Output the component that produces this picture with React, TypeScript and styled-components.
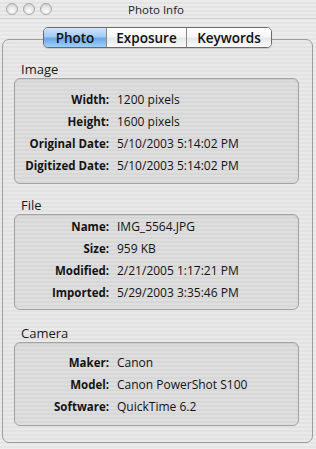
import React from "react";
import styled, { createGlobalStyle } from "styled-components";

const GlobalStyle = createGlobalStyle`
  html, body {
    margin: 0;
    padding: 0;
    background: #e9e9e9;
  }
  * {
    box-sizing: border-box;
  }
`;

const pinstripe = (a: string, b: string) =>
  `repeating-linear-gradient(to bottom, ${a} 0px, ${a} 2px, ${b} 2px, ${b} 4px)`;

const Window = styled.div`
  width: 316px;
  height: 449px;
  background: ${pinstripe("#ececec", "#e5e5e5")};
  font-family: "Open Sans", "DejaVu Sans", sans-serif;
  color: #111;
  display: flex;
  flex-direction: column;
  overflow: hidden;
`;

const TitleBar = styled.div`
  height: 19px;
  display: flex;
  align-items: center;
  padding-left: 6px;
  background: ${pinstripe("#ebebeb", "#e3e3e3")};
  border-bottom: 1px solid #d2d2d2;
`;

const Lights = styled.div`
  display: flex;
  gap: 5px;
`;

const Light = styled.span`
  width: 12px;
  height: 12px;
  border-radius: 50%;
  border: 1px solid #a9a9a9;
  background: radial-gradient(circle at 50% 70%, #ffffff 0%, #e2e2e2 55%, #c4c4c4 100%);
`;

const Title = styled.div`
  flex: 1;
  text-align: center;
  font-size: 11.5px;
  color: #222;
  margin-right: 56px;
`;

const Body = styled.div`
  flex: 1;
  display: flex;
  flex-direction: column;
  padding: 8px 3px 6px 2px;
`;

const Tabs = styled.div`
  align-self: center;
  display: flex;
  height: 21px;
  border: 1px solid #6b6b6b;
  border-radius: 5px;
  overflow: hidden;
  position: relative;
  z-index: 1;
  margin-bottom: -9px;
  box-shadow: 0 1px 1px rgba(0, 0, 0, 0.15);
`;

const Tab = styled.div<{ $active?: boolean; $w: number }>`
  width: ${(p) => p.$w}px;
  display: flex;
  align-items: center;
  justify-content: center;
  font-size: 13.5px;
  font-weight: 600;
  color: #111;
  border-left: 1px solid #8a8a8a;
  &:first-child {
    border-left: none;
  }
  background: ${(p) =>
    p.$active
      ? "linear-gradient(to bottom, #cfe4fb 0%, #a4caf3 45%, #6aa8ea 55%, #9fd0fb 100%)"
      : "linear-gradient(to bottom, #ffffff 0%, #f6f6f6 45%, #e8e8e8 55%, #fafafa 100%)"};
`;

const Pane = styled.div`
  flex: 1;
  border: 1px solid #9c9c9c;
  border-radius: 7px;
  background: ${pinstripe("#e9e9e9", "#e2e2e2")};
  padding: 21px 13px 0 11px;
  display: flex;
  flex-direction: column;
`;

const Group = styled.section<{ $gap?: number }>`
  margin-top: ${(p) => p.$gap ?? 0}px;
`;

const GroupTitle = styled.div`
  height: 17px;
  line-height: 17px;
  font-size: 13px;
  padding-left: 7px;
  color: #1a1a1a;
`;

const Box = styled.div<{ $top: number; $bottom: number }>`
  border: 1px solid #a3a3a3;
  border-radius: 6px;
  background: ${pinstripe("#dedede", "#d7d7d7")};
  padding: ${(p) => p.$top}px 0 ${(p) => p.$bottom}px 0;
  display: grid;
  grid-template-columns: 94px 1fr;
  grid-auto-rows: 22px;
  column-gap: 8px;
  box-shadow: inset 0 1px 1px rgba(0, 0, 0, 0.08);
`;

const Label = styled.div`
  font-size: 11.5px;
  font-weight: 700;
  text-align: right;
  line-height: 22px;
  white-space: nowrap;
  color: #141414;
`;

const Value = styled.div`
  font-size: 12px;
  line-height: 22px;
  white-space: nowrap;
  color: #141414;
`;

type Row = [string, string];

const groups: { title: string; top: number; bottom: number; gap: number; rows: Row[] }[] = [
  {
    title: "Image",
    top: 10,
    bottom: 6,
    gap: 0,
    rows: [
      ["Width:", "1200 pixels"],
      ["Height:", "1600 pixels"],
      ["Original Date:", "5/10/2003 5:14:02 PM"],
      ["Digitized Date:", "5/10/2003 5:14:02 PM"],
    ],
  },
  {
    title: "File",
    top: 1,
    bottom: 5,
    gap: 13,
    rows: [
      ["Name:", "IMG_5564.JPG"],
      ["Size:", "959 KB"],
      ["Modified:", "2/21/2005 1:17:21 PM"],
      ["Imported:", "5/29/2003 3:35:46 PM"],
    ],
  },
  {
    title: "Camera",
    top: 9,
    bottom: 7,
    gap: 15,
    rows: [
      ["Maker:", "Canon"],
      ["Model:", "Canon PowerShot S100"],
      ["Software:", "QuickTime 6.2"],
    ],
  },
];

export default function App() {
  return (
    <>
      <GlobalStyle />
      <Window>
        <TitleBar>
          <Lights>
            <Light />
            <Light />
            <Light />
          </Lights>
          <Title>Photo Info</Title>
        </TitleBar>
        <Body>
          <Tabs>
            <Tab $active $w={62}>
              Photo
            </Tab>
            <Tab $w={80}>Exposure</Tab>
            <Tab $w={85}>Keywords</Tab>
          </Tabs>
          <Pane>
            {groups.map((g) => (
              <Group key={g.title} $gap={g.gap}>
                <GroupTitle>{g.title}</GroupTitle>
                <Box $top={g.top} $bottom={g.bottom}>
                  {g.rows.map(([k, v]) => (
                    <React.Fragment key={k}>
                      <Label>{k}</Label>
                      <Value>{v}</Value>
                    </React.Fragment>
                  ))}
                </Box>
              </Group>
            ))}
          </Pane>
        </Body>
      </Window>
    </>
  );
}
